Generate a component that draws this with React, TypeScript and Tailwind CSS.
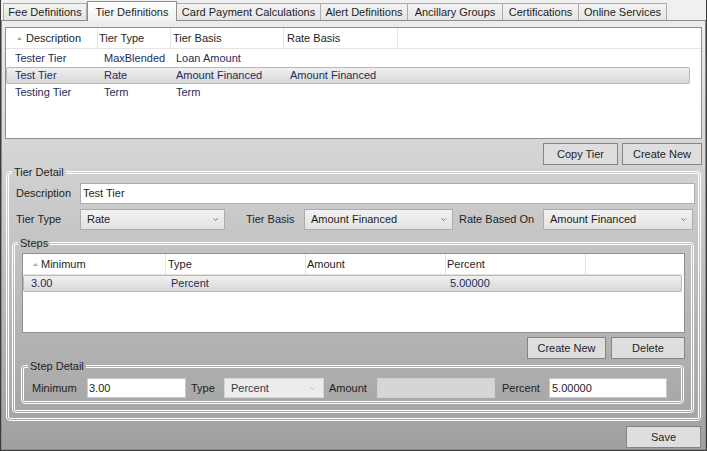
import React from "react";

function SortArrow() {
  return (
    <svg width="5" height="3" viewBox="0 0 5 3" className="shrink-0">
      <polygon points="0,3 2.5,0 5,3" fill="#a9a9a9" />
    </svg>
  );
}

function Chevron({ light }: { light?: boolean }) {
  return (
    <svg width="5" height="3" viewBox="0 0 5 3" className="shrink-0">
      <path
        d="M0.5 0.5 L2.5 2.5 L4.5 0.5"
        fill="none"
        stroke={light ? "#bdbdbd" : "#707070"}
        strokeWidth="1"
      />
    </svg>
  );
}

function Tab({ w, first, children }: { w: string; first?: boolean; children: React.ReactNode }) {
  return (
    <div
      className={`flex h-[17px] ${w} items-start justify-center border-t border-r border-[#acacac] bg-gradient-to-b from-[#f3f3f3] to-[#e4e4e4] pt-[2px] ${
        first ? "border-l" : ""
      }`}
    >
      {children}
    </div>
  );
}

function Combo({ w, value }: { w: string; value: string }) {
  return (
    <div
      className={`flex h-[21px] ${w} shrink-0 items-center justify-between border border-[#acacac] bg-gradient-to-b from-[#f2f2f2] to-[#e2e2e2] pl-[6px] pr-[6px]`}
    >
      <span>{value}</span>
      <Chevron />
    </div>
  );
}

function Button({ w, children }: { w: string; children: React.ReactNode }) {
  return (
    <div
      className={`flex h-[22px] ${w} items-center justify-center border border-[#858585] bg-[#dedede]`}
    >
      {children}
    </div>
  );
}

export default function App() {
  return (
    <div className="flex h-[451px] w-[707px] flex-col overflow-hidden border-x border-b border-[#3a3a3a] bg-[#f0f0f0] font-['Liberation_Sans',Arial,sans-serif] text-[11px] leading-[13px] text-[#1e1e1e]">
      {/* tab strip */}
      <div className="relative z-10 flex h-[20px] shrink-0 items-end pl-[2px]">
        <Tab w="w-[84px]" first>
          Fee Definitions
        </Tab>
        <div className="relative -mb-px flex h-[20px] w-[90px] items-start justify-center border-x border-t border-[#8e8f8f] bg-gradient-to-b from-white to-[#f0f0f0] pt-[4px]">
          Tier Definitions
        </div>
        <Tab w="w-[144px]">Card Payment Calculations</Tab>
        <Tab w="w-[87px]">Alert Definitions</Tab>
        <Tab w="w-[95px]">Ancillary Groups</Tab>
        <Tab w="w-[76px]">Certifications</Tab>
        <Tab w="w-[88px]">Online Services</Tab>
      </div>

      {/* tab page */}
      <div className="flex min-h-0 flex-1 flex-col border border-[#898c95] bg-gradient-to-b from-[#ececec] to-[#a0a0a0] px-[3px] pt-[6px]">
        {/* tier list */}
        <div className="h-[112px] shrink-0 border border-[#8f8f8f] bg-white">
          <div className="flex h-[21px] items-center border-b border-[#e5e5e5]">
            <div className="flex h-full w-[91px] items-center gap-[4px] pl-[11px]">
              <SortArrow />
              <span>Description</span>
            </div>
            <div className="flex h-full w-[73px] items-center border-l border-[#e5e5e5] pl-[1px]">Tier Type</div>
            <div className="flex h-full w-[113px] items-center border-l border-[#e5e5e5] pl-[2px]">Tier Basis</div>
            <div className="flex h-full w-[114px] items-center border-l border-[#e5e5e5] pl-[3px]">Rate Basis</div>
            <div className="h-full w-[300px] border-l border-[#e5e5e5]" />
          </div>
          <div className="mt-px text-[#1c2d5a]">
            <div className="flex h-[17px] items-center">
              <div className="w-[91px] pl-[9px]">Tester Tier</div>
              <div className="w-[73px] pl-[7px]">MaxBlended</div>
              <div className="w-[113px] pl-[6px]">Loan Amount</div>
              <div className="w-[114px] pl-[7px]" />
            </div>
            <div className="flex h-[17px] w-[684px] items-center rounded-[2px] border border-[#b8b8b8] bg-gradient-to-b from-[#f0f0f0] to-[#d9d9d9]">
              <div className="w-[90px] pl-[8px]">Test Tier</div>
              <div className="w-[73px] pl-[7px]">Rate</div>
              <div className="w-[113px] pl-[6px]">Amount Financed</div>
              <div className="w-[114px] pl-[7px]">Amount Financed</div>
            </div>
            <div className="flex h-[17px] items-center">
              <div className="w-[91px] pl-[9px]">Testing Tier</div>
              <div className="w-[73px] pl-[7px]">Term</div>
              <div className="w-[113px] pl-[6px]">Term</div>
              <div className="w-[114px] pl-[7px]" />
            </div>
          </div>
        </div>

        <div className="mt-[4px] flex shrink-0 justify-end gap-[4px]">
          <Button w="w-[75px]">Copy Tier</Button>
          <Button w="w-[80px]">Create New</Button>
        </div>

        {/* Tier Detail */}
        <fieldset className="mx-px mt-px h-[255px] shrink-0 rounded-[4px] border-[3px] border-double border-white">
          <legend className="ml-[3px] px-[2px] leading-[13px]">Tier Detail</legend>
          <div className="mt-[4px] flex h-[21px] items-center pl-[7px] pr-[3px]">
            <span className="w-[64px] shrink-0">Description</span>
            <div className="flex h-[21px] flex-1 items-center border border-[#abadb3] bg-white pl-[2px]">
              Test Tier
            </div>
          </div>
          <div className="mt-[5px] flex h-[21px] items-center pl-[7px]">
            <span className="w-[64px] shrink-0">Tier Type</span>
            <Combo w="w-[145px]" value="Rate" />
            <span className="ml-[21px] w-[58px] shrink-0">Tier Basis</span>
            <Combo w="w-[149px]" value="Amount Financed" />
            <span className="ml-[6px] w-[84px] shrink-0">Rate Based On</span>
            <Combo w="w-[150px]" value="Amount Financed" />
          </div>

          {/* Steps */}
          <fieldset className="ml-[3px] mr-[4px] mt-[7px] h-[176px] rounded-[4px] border-[3px] border-double border-white">
            <legend className="ml-[3px] px-[2px] leading-[13px]">Steps</legend>
            <div className="ml-[7px] mr-[6px] mt-[3px] h-[80px] border border-[#8f8f8f] bg-white">
              <div className="flex h-[21px] items-center border-b border-[#e5e5e5]">
                <div className="flex h-full w-[142px] items-center gap-[3px] pl-[10px]">
                  <SortArrow />
                  <span>Minimum</span>
                </div>
                <div className="flex h-full w-[140px] items-center border-l border-[#e5e5e5] pl-[2px]">Type</div>
                <div className="flex h-full w-[140px] items-center border-l border-[#e5e5e5] pl-[1px]">Amount</div>
                <div className="flex h-full w-[140px] items-center border-l border-[#e5e5e5] pl-[1px]">Percent</div>
                <div className="h-full w-[99px] border-l border-[#e5e5e5]" />
              </div>
              <div className="flex h-[17px] w-[659px] items-center rounded-[2px] border border-[#b8b8b8] bg-gradient-to-b from-[#f0f0f0] to-[#d9d9d9] text-[#1c2d5a]">
                <div className="w-[141px] pl-[7px]">3.00</div>
                <div className="w-[140px] pl-[6px]">Percent</div>
                <div className="w-[140px]" />
                <div className="w-[140px] pl-[5px]">5.00000</div>
              </div>
            </div>

            <div className="mr-[6px] mt-[4px] flex justify-end gap-[5px]">
              <Button w="w-[79px]">Create New</Button>
              <Button w="w-[74px]">Delete</Button>
            </div>

            {/* Step Detail */}
            <fieldset className="ml-[6px] mr-[7px] mt-px h-[44px] rounded-[4px] border-[3px] border-double border-white">
              <legend className="ml-[4px] px-[2px] leading-[13px]">Step Detail</legend>
              <div className="mt-[5px] flex h-[20px] items-center pl-[8px]">
                <span className="w-[55px] shrink-0">Minimum</span>
                <div className="flex h-[20px] w-[99px] shrink-0 items-center border border-[#c9c9c9] bg-white pl-px">
                  3.00
                </div>
                <span className="ml-[5px] w-[33px] shrink-0">Type</span>
                <div className="flex h-[20px] w-[100px] shrink-0 items-center justify-between border border-[#d6d6d6] bg-[#ececec] pl-[6px] pr-[8px] text-[#3c3c3c]">
                  <span>Percent</span>
                  <Chevron light />
                </div>
                <span className="ml-[5px] w-[48px] shrink-0">Amount</span>
                <div className="h-[20px] w-[118px] shrink-0 border border-[#d0d0d0] bg-[#d6d6d6]" />
                <span className="ml-[7px] w-[47px] shrink-0">Percent</span>
                <div className="flex h-[20px] w-[118px] shrink-0 items-center border border-[#c9c9c9] bg-white pl-[2px]">
                  5.00000
                </div>
              </div>
            </fieldset>
          </fieldset>
        </fieldset>

        <div className="mr-px mt-[5px] flex shrink-0 justify-end">
          <Button w="w-[75px]">Save</Button>
        </div>
      </div>
    </div>
  );
}
